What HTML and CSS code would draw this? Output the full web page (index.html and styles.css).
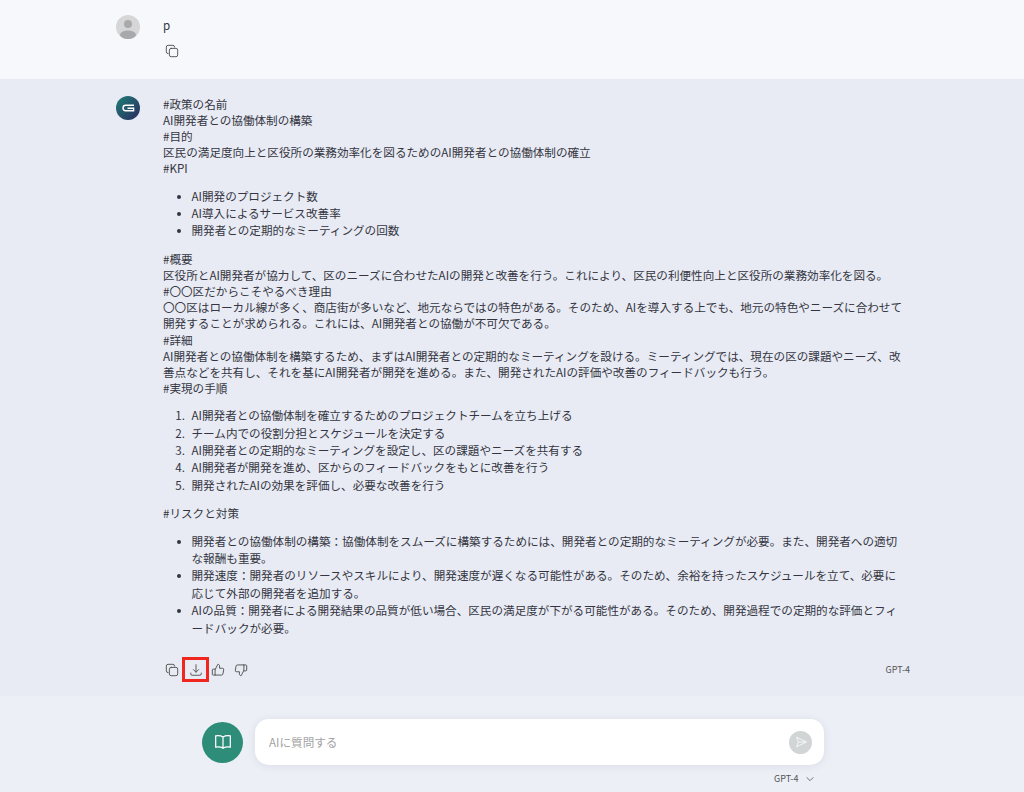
FILE: index.html
```html
<!DOCTYPE html>
<html lang="ja">
<head>
<meta charset="utf-8">
<title>Chat</title>
<link rel="stylesheet" href="styles.css">
</head>
<body>
<div class="page">
  <section class="msg user">
    <div class="avatar-col">
      <svg class="avatar" viewBox="0 0 24 24"><defs><clipPath id="c"><circle cx="12" cy="12" r="12"/></clipPath></defs><circle cx="12" cy="12" r="12" fill="#d6d6d8"/><g clip-path="url(#c)"><circle cx="12" cy="9" r="4" fill="#a9a9ab"/><ellipse cx="12" cy="20" rx="8" ry="4.6" fill="#a9a9ab"/></g></svg>
    </div>
    <div class="body">
      <p class="user-text">p</p>
      <div class="tools user-tools">
        <svg class="ic" viewBox="0 0 16 16"><rect x="5" y="5" width="9.5" height="9.5" rx="2"/><path d="M3.5 11A2 2 0 0 1 1.500 9V3.500a2 2 0 0 1 2-2H9a2 2 0 0 1 2 2"/></svg>
      </div>
    </div>
  </section>
  <section class="msg bot">
    <div class="avatar-col">
      <svg class="avatar" viewBox="0 0 24 24"><defs><linearGradient id="g" x1="0" y1="0" x2="1" y2="1"><stop offset="0" stop-color="#1f7f78"/><stop offset="1" stop-color="#2a2a5e"/></linearGradient></defs><circle cx="12" cy="12" r="12" fill="url(#g)"/><path d="M18 9.300H9.700a2.700 2.700 0 0 0 0 5.400H17.600V12.200H11.500" fill="none" stroke="#fff" stroke-width="1.400"/></svg>
    </div>
    <div class="body">
      <div class="content">
        <p>#政策の名前<br>AI開発者との協働体制の構築<br>#目的<br>区民の満足度向上と区役所の業務効率化を図るためのAI開発者との協働体制の確立<br>#KPI</p>
        <ul>
          <li>AI開発のプロジェクト数</li>
          <li>AI導入によるサービス改善率</li>
          <li>開発者との定期的なミーティングの回数</li>
        </ul>
        <p>#概要<br>区役所とAI開発者が協力して、区のニーズに合わせたAIの開発と改善を行う。これにより、区民の利便性向上と区役所の業務効率化を図る。<br>#〇〇区だからこそやるべき理由<br>〇〇区はローカル線が多く、商店街が多いなど、地元ならではの特色がある。そのため、AIを導入する上でも、地元の特色やニーズに合わせて開発することが求められる。これには、AI開発者との協働が不可欠である。<br>#詳細<br>AI開発者との協働体制を構築するため、まずはAI開発者との定期的なミーティングを設ける。ミーティングでは、現在の区の課題やニーズ、改善点などを共有し、それを基にAI開発者が開発を進める。また、開発されたAIの評価や改善のフィードバックも行う。<br>#実現の手順</p>
        <ol>
          <li>AI開発者との協働体制を確立するためのプロジェクトチームを立ち上げる</li>
          <li>チーム内での役割分担とスケジュールを決定する</li>
          <li>AI開発者との定期的なミーティングを設定し、区の課題やニーズを共有する</li>
          <li>AI開発者が開発を進め、区からのフィードバックをもとに改善を行う</li>
          <li>開発されたAIの効果を評価し、必要な改善を行う</li>
        </ol>
        <p>#リスクと対策</p>
        <ul>
          <li>開発者との協働体制の構築：協働体制をスムーズに構築するためには、開発者との定期的なミーティングが必要。また、開発者への適切な報酬も重要。</li>
          <li>開発速度：開発者のリソースやスキルにより、開発速度が遅くなる可能性がある。そのため、余裕を持ったスケジュールを立て、必要に応じて外部の開発者を追加する。</li>
          <li>AIの品質：開発者による開発結果の品質が低い場合、区民の満足度が下がる可能性がある。そのため、開発過程での定期的な評価とフィードバックが必要。</li>
        </ul>
      </div>
      <div class="tools bot-tools">
        <svg class="ic" viewBox="0 0 16 16"><rect x="5" y="5" width="9.500" height="9.500" rx="2"/><path d="M3.500 11A2 2 0 0 1 1.500 9V3.500a2 2 0 0 1 2-2H9a2 2 0 0 1 2 2"/></svg>
        <span class="dl"><svg class="ic" viewBox="0 0 16 16"><path d="M8 2v8.500M5 7.500l3 3 3-3M2 11.500V12.500a1.500 1.500 0 0 0 1.500 1.500h9a1.500 1.500 0 0 0 1.500-1.500v-1"/></svg></span>
        <svg class="ic" viewBox="0 0 16 16"><path d="M5 7l2.800-5.500c1.300 0 2 .8 2 2V6h3.200a1.500 1.500 0 0 1 1.500 1.800l-.9 4.800a1.500 1.500 0 0 1-1.500 1.200H5zM5 7H2.500a1 1 0 0 0-1 1v4.800a1 1 0 0 0 1 1H5"/></svg>
        <svg class="ic thumb-down" viewBox="0 0 16 16"><path d="M5 7l2.800-5.500c1.300 0 2 .8 2 2V6h3.200a1.500 1.500 0 0 1 1.500 1.800l-.9 4.800a1.500 1.500 0 0 1-1.500 1.200H5zM5 7H2.500a1 1 0 0 0-1 1v4.800a1 1 0 0 0 1 1H5"/></svg>
        <span class="model-tag">GPT-4</span>
      </div>
    </div>
  </section>
  <footer class="composer">
    <div class="input-row">
      <div class="book">
        <svg viewBox="0 0 16 16"><path d="M8 3.500C6.500 2.500 4 2.200 1.500 2.500v10c2.500-.3 5 0 6.500 1 1.500-1 4-1.300 6.500-1v-10C12 2.200 9.500 2.500 8 3.500zM8 3.500v10"/></svg>
      </div>
      <div class="input">
        <span class="placeholder">AIに質問する</span>
        <span class="send"><svg viewBox="0 0 16 16"><path d="M3 2.500L14 8 3 13.500 5 8zM5 8h9"/></svg></span>
      </div>
    </div>
    <div class="model-select">
      <span>GPT-4</span>
      <svg viewBox="0 0 12 12"><path d="M2 4l4 4 4-4"/></svg>
    </div>
  </footer>
</div>
</body>
</html>
```
FILE: styles.css
```css
* { box-sizing: border-box; }
html, body { margin: 0; padding: 0; height: 100%; overflow: hidden; }
body {
  font-family: "Noto Sans CJK JP", "Noto Sans", sans-serif;
  font-size: 11.6px;
  color: #343541;
  background: #eceff6;
}
.page { width: 1024px; height: 792px; display: flex; flex-direction: column; }
.msg { display: flex; padding-left: 116px; padding-right: 114px; }
.user { background: #f7f8fc; height: 79px; padding-top: 15px; }
.bot { background: #e8ebf4; height: 617px; padding-top: 17px; }
.avatar-col { width: 47px; flex: none; }
.avatar { width: 24px; height: 24px; display: block; }
.body { flex: 1; min-width: 0; }
.user-text { margin: 0; line-height: 20px; font-size: 11.6px; }
.content { line-height: 16.1px; padding-right: 2px; }
.content p { margin: 0; }
.content ul, .content ol { margin: 11.2px 0; padding-left: 28.5px; line-height: 17.4px; }
.content ul { padding-right: 3px; }
.content ol li { padding-left: 4px; margin-left: -4px; }
.tools { display: flex; align-items: center; }
.user-tools { margin-top: 9px; padding-left: 2px; }
.bot-tools { margin-top: 20px; padding-left: 2px; height: 25px; }
.ic { width: 14px; height: 14px; fill: none; stroke: #555; stroke-width: 1.1; stroke-linecap: round; stroke-linejoin: round; display: block; }
.dl { width: 27px; height: 25px; border: 3px solid #f0271e; display: flex; align-items: center; justify-content: center; margin: 0 2px 0 3px; }
.thumb-down { transform: scale(-1, -1); margin-left: 9px; }
.model-tag { margin-left: auto; font-size: 9px; color: #555; }
.composer { flex: 1; display: flex; flex-direction: column; position: relative; }
.input-row { display: flex; align-items: center; gap: 12px; margin: 23px 0 0 202px; }
.book { width: 41px; height: 41px; border-radius: 50%; background: #2d8d79; display: flex; align-items: center; justify-content: center; }
.book svg { width: 18px; height: 18px; fill: none; stroke: #fff; stroke-width: 1.1; }
.input { width: 569px; height: 46px; background: #fff; border-radius: 14px; box-shadow: 0 1px 8px rgba(60,70,100,.1); display: flex; align-items: center; justify-content: space-between; padding: 0 12px 0 14px; }
.placeholder { color: #a3a3a3; font-size: 11.6px; }
.send { width: 23px; height: 23px; border-radius: 50%; background: #d2d5d6; display: flex; align-items: center; justify-content: center; }
.send svg { width: 14px; height: 14px; fill: none; stroke: #fff; stroke-width: .9; }
.model-select { display: flex; align-items: center; gap: 7px; margin: 7px 0 0 774px; font-size: 9px; color: #555; }
.model-select svg { width: 10px; height: 10px; fill: none; stroke: #555; stroke-width: 1; }
```
